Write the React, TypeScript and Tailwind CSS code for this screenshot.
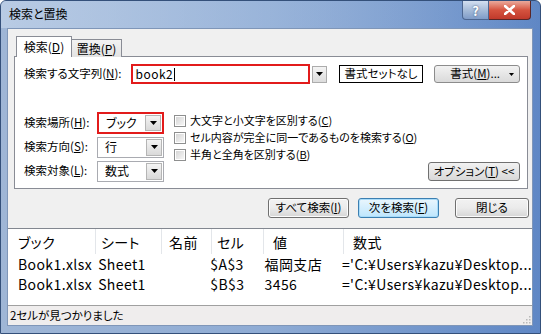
import React from "react";

const Arrow = () => (
  <svg width="7" height="4" viewBox="0 0 7 4" className="block">
    <path d="M0 0H7L3.5 4Z" fill="#000" />
  </svg>
);

function Combo({ value, red }: { value: string; red?: boolean }) {
  return (
    <div
      className={
        "w-[67px] flex items-center bg-white " +
        (red ? "h-[22px] border-2 border-[#e21b1b]" : "h-[21px] border border-[#a9abb1]")
      }
    >
      <span className="flex-1 pl-[7px] text-[12px] leading-none">{value}</span>
      <div className="w-[16px] h-[calc(100%-2px)] mr-[1px] flex items-center justify-center border border-[#b5b5b5] bg-gradient-to-b from-[#f4f4f4] to-[#d9d9d9]">
        <Arrow />
      </div>
    </div>
  );
}

function Check({ children }: { children: React.ReactNode }) {
  return (
    <div className="h-[17px] flex items-center gap-[4px] whitespace-nowrap">
      <div className="w-[12px] h-[12px] shrink-0 border border-[#8e8f8f] bg-white p-[1px]">
        <div className="w-full h-full bg-gradient-to-br from-[#d6d6d6] to-[#f6f6f6]" />
      </div>
      <span className="text-[11px] leading-none">{children}</span>
    </div>
  );
}

function Btn({ children, w, active }: { children: React.ReactNode; w: string; active?: boolean }) {
  return (
    <div
      className={
        w +
        " h-[20px] rounded-[3px] flex items-center justify-center text-[11.5px] leading-none whitespace-nowrap " +
        (active
          ? "border border-[#3c7fb1] bg-gradient-to-b from-[#eaf6fd] to-[#bee6fd] shadow-[inset_0_0_0_1px_#a8dcfa]"
          : "border border-[#707070] bg-gradient-to-b from-[#f2f2f2] via-[#ebebeb] to-[#d6d6d6] shadow-[inset_0_0_0_1px_#fcfcfc]")
      }
    >
      {children}
    </div>
  );
}

const U = ({ c }: { c: string }) => <span className="underline underline-offset-[1px]">{c}</span>;

const cols = [
  { w: "w-[88px]", pl: "pl-[10px]", h: "ブック" },
  { w: "w-[66px]", pl: "pl-[5px]", h: "シート" },
  { w: "w-[50px]", pl: "pl-[7px]", h: "名前" },
  { w: "w-[52px]", pl: "pl-[5px]", h: "セル" },
  { w: "w-[80px]", pl: "pl-[9px]", h: "値" },
  { w: "flex-1", pl: "pl-[9px]", h: "数式" },
];

const rows = [
  ["Book1.xlsx", "Sheet1", "", "$A$3", "福岡支店", "='C:¥Users¥kazu¥Desktop..."],
  ["Book1.xlsx", "Sheet1", "", "$B$3", "3456", "='C:¥Users¥kazu¥Desktop..."],
];

export default function App() {
  return (
    <div className="w-[541px] h-[334px] overflow-hidden flex flex-col text-black font-['Noto_Sans_CJK_JP',sans-serif] [font-feature-settings:'palt'] bg-gradient-to-r from-[#9fb6d6] via-[#8eabd4] to-[#5f87c5] rounded-t-[6px] border border-[#34507a]">
      {/* Title bar */}
      <div className="h-[27px] flex items-start shrink-0 bg-gradient-to-r from-[#c3d4ea]/70 via-[#a9c1e2]/40 to-transparent">
        <span className="pl-[8px] pt-[7px] text-[12px] leading-none">検索と置換</span>
        <div className="ml-auto mr-[9px] flex">
          <div className="w-[27px] h-[19px] rounded-bl-[4px] border border-t-0 border-[#4c6690] bg-gradient-to-b from-[#d3dff0] via-[#a7bcd9] to-[#7f9cc8] flex items-center justify-center text-white font-bold text-[13px] leading-none [text-shadow:0_0_2px_#33476b]">
            ?
          </div>
          <div className="w-[42px] h-[19px] rounded-br-[4px] border border-t-0 border-l-0 border-[#5a2626] bg-gradient-to-b from-[#e9a99c] via-[#d5533f] to-[#c0392b] flex items-center justify-center">
            <svg width="11" height="10" viewBox="0 0 11 10">
              <path d="M1 1L10 9M10 1L1 9" stroke="#fff" strokeWidth="2.6" strokeLinecap="round" />
            </svg>
          </div>
        </div>
      </div>

      {/* Client area */}
      <div className="flex-1 ml-[6px] mr-[7px] bg-[#f0f0f0] border border-[#7f96b8] flex flex-col min-h-0">
        {/* Tabs */}
        <div className="flex items-end mt-[7px] ml-[8px] h-[21px] relative z-10">
          <div className="w-[56px] h-[21px] bg-white border border-b-0 border-[#898c95] flex items-center justify-center text-[12px] leading-none">
            検索(<U c="D" />)
          </div>
          <div className="w-[50px] h-[18px] border border-l-0 border-b-0 border-[#898c95] bg-gradient-to-b from-[#f2f2f2] to-[#e3e3e3] flex items-center justify-center text-[12px] leading-none">
            置換(<U c="P" />)
          </div>
        </div>

        {/* Panel */}
        <div className="ml-[6px] mr-[4px] -mt-[1px] h-[133px] bg-white border border-[#898c95] pl-[9px] pr-[7px] flex flex-col">
          <div className="mt-[7px] h-[20px] flex items-center">
            <span className="w-[107px] text-[11.5px] leading-none whitespace-nowrap">
              検索する文字列(<U c="N" />):
            </span>
            <div className="w-[180px] h-[20px] border-2 border-[#e21b1b] flex items-center pl-[3px] text-[12px] leading-none tracking-[0.5px]">
              book2<span className="w-px h-[13px] bg-black ml-[1px]" />
            </div>
            <div className="ml-[2px] w-[15px] h-[17px] border border-[#acacac] bg-gradient-to-b from-[#f4f4f4] to-[#dcdcdc] flex items-center justify-center">
              <Arrow />
            </div>
            <div className="ml-[12px] w-[85px] h-[18px] border border-black flex items-center justify-center text-[11.5px] leading-none whitespace-nowrap">
              書式セットなし
            </div>
            <div className="ml-[11px] w-[86px] h-[18px] rounded-[3px] border border-[#8c8c8c] bg-gradient-to-b from-[#f2f2f2] to-[#dadada] flex items-center text-[11.5px] leading-none whitespace-nowrap">
              <span className="flex-1 text-center pl-[6px]">
                書式(<U c="M" />)...
              </span>
              <svg width="5" height="3" viewBox="0 0 5 3" className="mr-[5px]">
                <path d="M0 0H5L2.5 3Z" fill="#000" />
              </svg>
            </div>
          </div>

          <div className="mt-[28px] flex items-start">
            <div className="flex flex-col gap-[2px] shrink-0">
              {[
                ["検索場所", "H", "ブック", true],
                ["検索方向", "S", "行", false],
                ["検索対象", "L", "数式", false],
              ].map(([l, k, v, red]) => (
                <div key={l as string} className="h-[22px] flex items-center">
                  <span className="w-[73px] text-[11.5px] leading-none whitespace-nowrap">
                    {l}(<U c={k as string} />):
                  </span>
                  <Combo value={v as string} red={red as boolean} />
                </div>
              ))}
            </div>
            <div className="ml-[10px] flex flex-col min-w-0">
              <Check>
                大文字と小文字を区別する(<U c="C" />)
              </Check>
              <Check>
                セル内容が完全に同一であるものを検索する(<U c="O" />)
              </Check>
              <Check>
                半角と全角を区別する(<U c="B" />)
              </Check>
            </div>
            <div className="ml-auto shrink-0 self-end mb-[1px] w-[92px] h-[19px] rounded-[3px] border border-[#707070] bg-gradient-to-b from-[#f2f2f2] to-[#d8d8d8] flex items-center justify-center text-[11.5px] leading-none whitespace-nowrap">
              オプション(<U c="T" />) &lt;&lt;
            </div>
          </div>
        </div>

        {/* Buttons */}
        <div className="mt-[9px] mr-[3px] flex justify-end">
          <Btn w="w-[81px]">
            すべて検索(<U c="I" />)
          </Btn>
          <div className="ml-[9px]">
            <Btn w="w-[81px]" active>
              次を検索(<U c="F" />)
            </Btn>
          </div>
          <div className="ml-[16px]">
            <Btn w="w-[74px]">閉じる</Btn>
          </div>
        </div>

        {/* Results */}
        <div className="mt-[10px] h-[77px] bg-white border-t border-[#828790] flex flex-col text-[14px] leading-none tracking-[0.4px]">
          <div className="h-[25px] flex shrink-0">
            {cols.map((c, i) => (
              <div
                key={c.h}
                className={c.w + " " + c.pl + " flex items-center " + (i < cols.length - 1 ? "border-r border-[#e3e6ea]" : "")}
              >
                {c.h}
              </div>
            ))}
          </div>
          {rows.map((r, ri) => (
            <div key={ri} className="h-[20px] flex shrink-0">
              {r.map((cell, i) => (
                <div key={i} className={cols[i].w + " " + cols[i].pl + " flex items-center whitespace-nowrap"}>
                  {cell}
                </div>
              ))}
            </div>
          ))}
        </div>

        {/* Status bar */}
        <div className="flex-1 bg-[#efeded] border-t border-[#a0a0a0] flex items-center pl-[2px] text-[11.5px] leading-none relative">
          2セルが見つかりました
          <svg width="10" height="10" viewBox="0 0 10 10" className="absolute right-[1px] bottom-[1px]">
            {[
              [8, 8],
              [5, 8],
              [8, 5],
              [2, 8],
              [5, 5],
              [8, 2],
            ].map(([x, y], i) => (
              <rect key={i} x={x} y={y} width="1.5" height="1.5" fill="#b9b9b9" />
            ))}
          </svg>
        </div>
      </div>
      <div className="h-[7px] shrink-0" />
    </div>
  );
}
